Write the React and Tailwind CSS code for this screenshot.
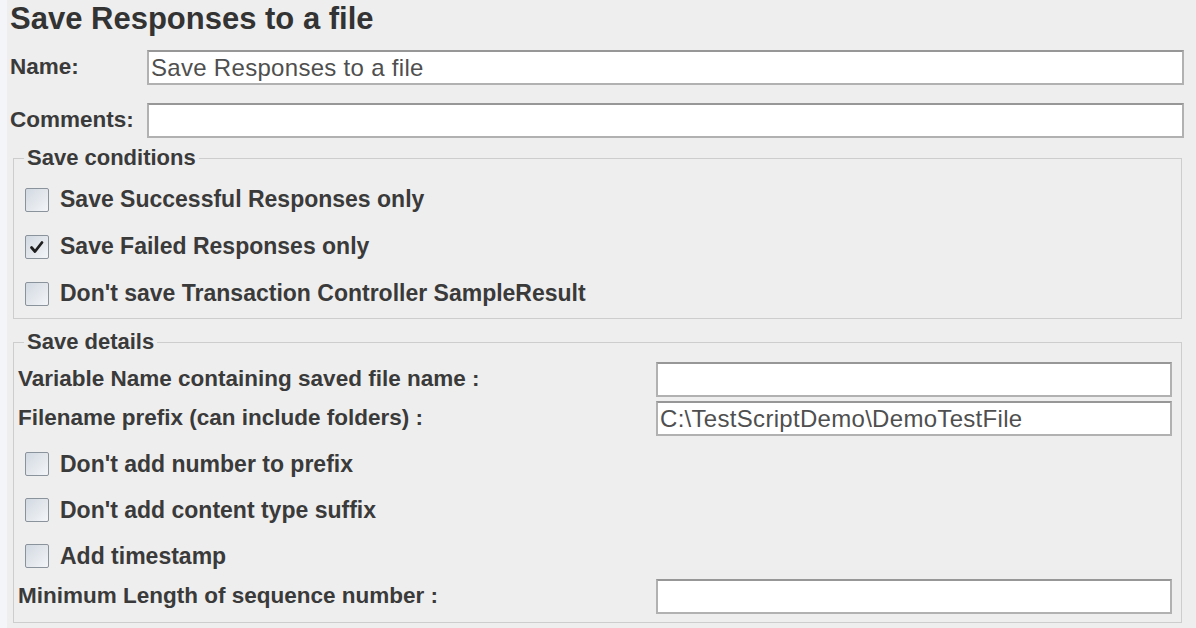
import React from 'react';

function CheckBox({ checked }) {
  return (
    <div className="w-[24px] h-[24px] shrink-0 border border-[#8a929b] rounded-[2px] bg-gradient-to-br from-[#d2d9e1] to-[#f3f5f8] flex items-center justify-center">
      {checked && (
        <svg width="20" height="20" viewBox="0 0 20 20">
          <path d="M4.5 10.5 L8 14.5 L15 5.5" fill="none" stroke="#1f1f1f" strokeWidth="2.8" strokeLinecap="round" strokeLinejoin="round" />
        </svg>
      )}
    </div>
  );
}

function CheckRow({ label, checked, h = 'h-[47px]' }) {
  return (
    <div className={`${h} flex items-center pl-[11px]`}>
      <CheckBox checked={checked} />
      <span className="ml-[11px] text-[23px] font-bold text-[#3a3a3a] leading-none whitespace-nowrap">{label}</span>
    </div>
  );
}

function TextBox({ value, className = '' }) {
  return (
    <div className={`h-[35px] bg-white border-2 border-[#b1b1b1] border-t-[#979797] flex items-center px-[2px] ${className}`}>
      <span className="text-[24px] text-[#4f4f4f] leading-none whitespace-nowrap tracking-[0.3px]">{value}</span>
    </div>
  );
}

function DetailRow({ label, value, className = '' }) {
  return (
    <div className={`flex items-center ${className}`}>
      <span className="flex-1 pl-[4px] text-[22.5px] font-bold text-[#3a3a3a] leading-none whitespace-nowrap">{label}</span>
      <TextBox value={value} className="w-[516px] mr-[9px]" />
    </div>
  );
}

export default function App() {
  return (
    <div className="w-[1196px] h-[628px] bg-[#eeeeee] flex overflow-hidden font-['Liberation_Sans',Arial,sans-serif]">
      {/* left edge of the window */}
      <div className="w-[7px] shrink-0 bg-[#f3f5f8]"></div>

      <div className="flex-1 flex flex-col">
        {/* Title */}
        <div className="h-[36px] flex items-center pl-[3px]">
          <h1 className="text-[31px] font-bold text-[#333333] leading-none">Save Responses to a file</h1>
        </div>

        {/* Name / Comments */}
        <div className="mt-[14px] flex items-center">
          <span className="w-[140px] pl-[3px] text-[22.5px] font-bold text-[#3a3a3a] leading-none">Name:</span>
          <TextBox value="Save Responses to a file" className="flex-1 mr-[12px]" />
        </div>
        <div className="mt-[18px] flex items-center">
          <span className="w-[140px] pl-[3px] text-[22.5px] font-bold text-[#3a3a3a] leading-none">Comments:</span>
          <TextBox value="" className="flex-1 mr-[12px] h-[34px]" />
        </div>

        {/* Save conditions */}
        <fieldset className="mt-[8px] ml-[6px] mr-[14px] border border-[#cdcdcd] pt-[6px] pb-[1px]">
          <legend className="ml-[10px] px-[3px] text-[22px] font-bold text-[#3a3a3a] leading-[24px]">Save conditions</legend>
          <CheckRow label="Save Successful Responses only" />
          <CheckRow label="Save Failed Responses only" checked />
          <CheckRow label="Don't save Transaction Controller SampleResult" />
        </fieldset>

        {/* Save details */}
        <fieldset className="mt-[11px] ml-[6px] mr-[14px] border border-[#cdcdcd] pt-[8px] pb-[8px]">
          <legend className="ml-[10px] px-[3px] text-[22px] font-bold text-[#3a3a3a] leading-[24px]">Save details</legend>
          <DetailRow label="Variable Name containing saved file name :" value="" />
          <DetailRow label="Filename prefix (can include folders) :" value="C:\TestScriptDemo\DemoTestFile" className="mt-[4px]" />
          <div className="mt-[5px]">
            <CheckRow label="Don't add number to prefix" h="h-[46px]" />
            <CheckRow label="Don't add content type suffix" h="h-[46px]" />
            <CheckRow label="Add timestamp" h="h-[46px]" />
          </div>
          <DetailRow label="Minimum Length of sequence number :" value="" />
        </fieldset>
      </div>
    </div>
  );
}
